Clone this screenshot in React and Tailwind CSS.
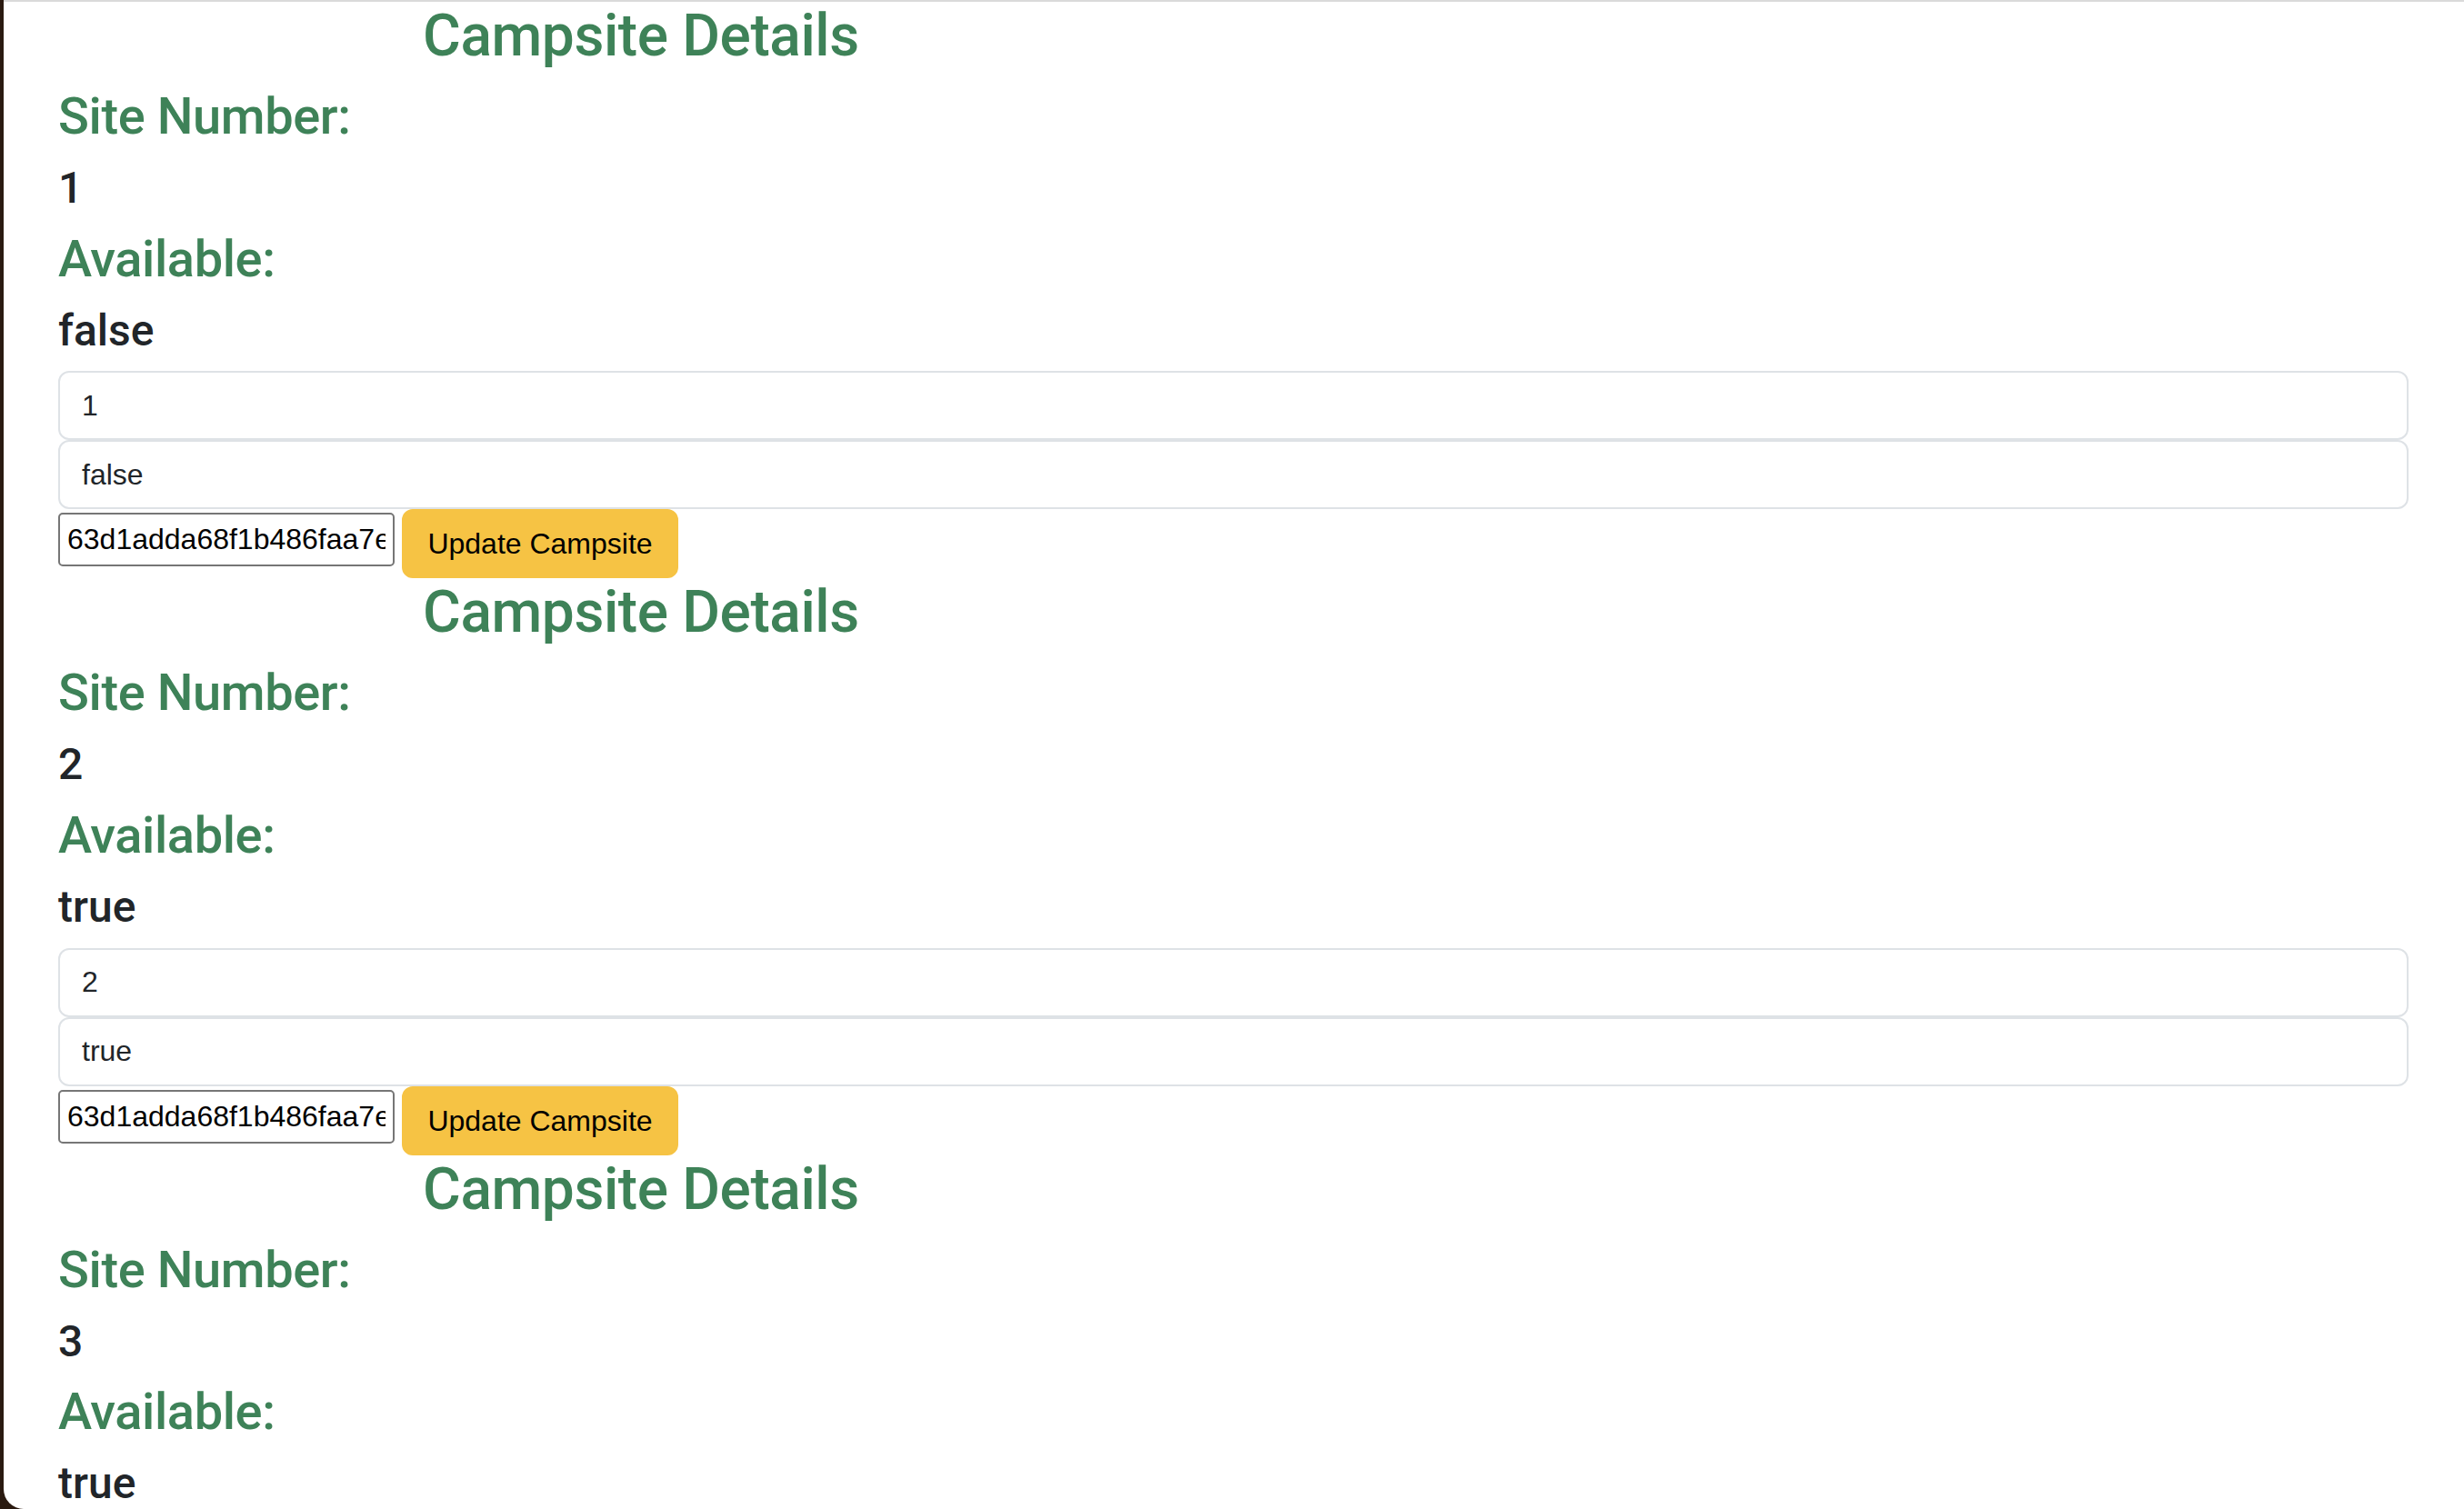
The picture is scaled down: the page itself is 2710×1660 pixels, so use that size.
import { useState } from 'react';

const SITES = [
    { number: 1, available: false, id: '63d1adda68f1b486faa7e1a2' },
    { number: 2, available: true, id: '63d1adda68f1b486faa7e1a3' },
    { number: 3, available: true, id: '63d1adda68f1b486faa7e1a4' },
];

function CampsiteCard({ site }) {
    const [number, setNumber] = useState(String(site.number));
    const [available, setAvailable] = useState(String(site.available));
    const [id, setId] = useState(site.id);

    return (
        <div>
            <h2 className="ml-[401px] mb-[16px] font-['Roboto',sans-serif] font-medium tracking-[-0.4px] text-[64px] leading-[1.2] text-[#3e8258]">Campsite Details</h2>
            <h3 className="mb-[16px] font-['Roboto',sans-serif] font-medium tracking-[-0.4px] text-[56px] leading-[1.2] text-[#3e8258]">Site Number:</h3>
            <h4 className="mb-[16px] font-['Roboto',sans-serif] font-medium text-[48px] leading-[1.2] text-[#212529]">{site.number}</h4>
            <h3 className="mb-[16px] font-['Roboto',sans-serif] font-medium tracking-[-0.4px] text-[56px] leading-[1.2] text-[#3e8258]">Available:</h3>
            <h4 className="mb-[16px] font-['Roboto',sans-serif] font-medium text-[48px] leading-[1.2] text-[#212529]">{String(site.available)}</h4>

            <input
                type="text"
                value={number}
                onChange={(e) => setNumber(e.target.value)}
                className="block w-full h-[76px] px-[24px] border-2 border-[#dee2e6] rounded-[12px] text-[32px] text-[#212529] bg-white outline-none"
            />
            <input
                type="text"
                value={available}
                onChange={(e) => setAvailable(e.target.value)}
                className="block w-full h-[76px] px-[24px] border-2 border-[#dee2e6] rounded-[12px] text-[32px] text-[#212529] bg-white outline-none"
            />

            <div className="flex items-start gap-[8px] h-[76px]">
                <input
                    type="text"
                    value={id}
                    onChange={(e) => setId(e.target.value)}
                    className="w-[370px] h-[59px] mt-[4px] px-[8px] border-2 border-[#767676] rounded-[5px] text-[32px] text-black bg-white outline-none"
                />
                <button className="w-[304px] h-[76px] bg-[#f6c344] border-2 border-[#f6c344] rounded-[12px] text-[32px] text-black">
                    Update Campsite
                </button>
            </div>
        </div>
    );
}

export default function App() {
    return (
        <div className="h-[1660px] overflow-hidden bg-[#2a1a10] pl-[4px]" style={{ fontFamily: '"Liberation Sans", Arial, sans-serif' }}>
            <div className="h-full bg-white rounded-bl-[22px] border-t-2 border-[#dadada] overflow-hidden">
                <div className="pl-[60px] pr-[61px]">
                    {SITES.map((site) => (
                        <CampsiteCard key={site.number} site={site} />
                    ))}
                </div>
            </div>
        </div>
    );
}
